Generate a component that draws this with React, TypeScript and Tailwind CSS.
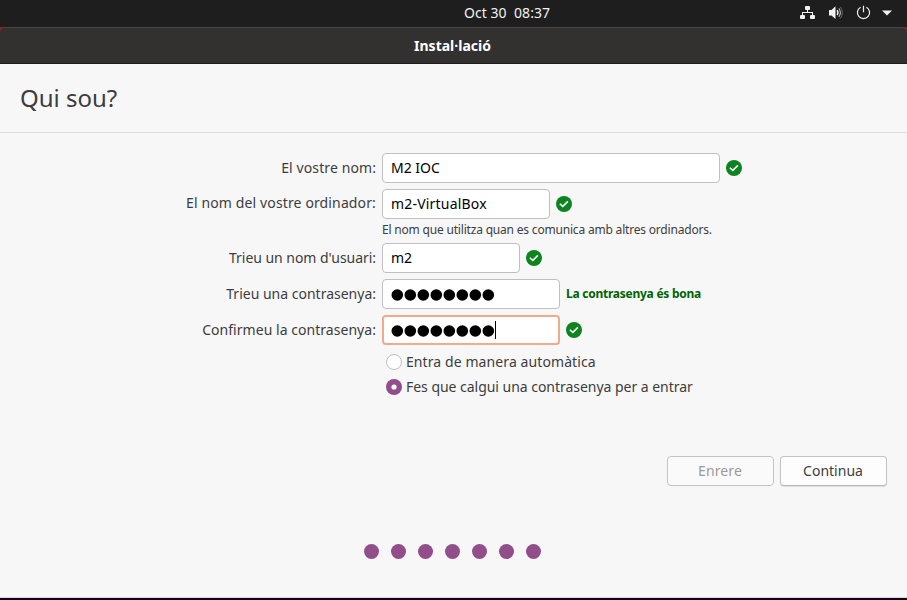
import type { ReactNode } from "react";

function Check() {
  return (
    <svg className="ml-1.5 size-4 shrink-0" viewBox="0 0 16 16">
      <circle cx="8" cy="8" r="8" fill="#0e8420" />
      <path d="M3.8 7.8 6.8 10.4 11.9 5.4" fill="none" stroke="#fff" strokeWidth="1.5" />
    </svg>
  );
}

function Bullets() {
  return (
    <svg className="mt-0.5 h-3 w-[104px]" viewBox="0 0 104 12">
      {Array.from({ length: 8 }, (_, i) => (
        <circle key={i} cx={6.3 + i * 13} cy="6" r="5.8" fill="#000" />
      ))}
    </svg>
  );
}

type RowProps = { label: string; labelClass?: string; className?: string; children: ReactNode };

function Row({ label, labelClass = "", className = "", children }: RowProps) {
  return (
    <div className={"flex h-[30px] items-center " + className}>
      <div className={"w-[376px] text-right whitespace-pre " + labelClass}>{label}</div>
      <div className="ml-1.5 flex h-full items-center">{children}</div>
    </div>
  );
}

const field =
  "flex h-[30px] items-center rounded-[4px] border border-[#bfbfbf] bg-white px-2 whitespace-pre text-black ";
const button =
  "flex h-[30px] w-[107px] items-center justify-center rounded-[4px] border border-[#c4c4c4] ";

function StatusIcons() {
  return (
    <div className="flex items-center pr-[15px]">
      {/* wired network */}
      <svg className="h-4 w-[15px]" viewBox="0 0 15 16" fill="#f2f2f2">
        <rect x="5" y="1" width="5" height="4" rx="1" />
        <rect x="0" y="10" width="5" height="4" rx="1" />
        <rect x="10" y="10" width="5" height="4" rx="1" />
        <path d="M7 4.5h1V7H13v3h-1V8H3v2H2V7h5z" />
      </svg>
      {/* volume */}
      <svg className="ml-[13px] size-4" viewBox="0 0 16 16">
        <path d="M1 5h2.5L7.5 1.2V14L3.5 10.5H1z" fill="#f2f2f2" />
        <path d="M9 5.2q2 2.3 0 4.8" fill="none" stroke="#f2f2f2" strokeWidth="1.4" />
        <path d="M10.8 3.4q3.2 4.2 0 8.4" fill="none" stroke="#b5b5b5" strokeWidth="1.1" />
        <path d="M12.3 1.8q4.2 5.8 0 11.6" fill="none" stroke="#666" strokeWidth="1" />
      </svg>
      {/* power */}
      <svg className="ml-3 size-4" viewBox="0 0 16 16" fill="none" stroke="#f2f2f2" strokeWidth="1.2">
        <path d="M4.6 2.2a6.1 6.1 0 1 0 5.8 0M7.5 0.7v6.5" />
      </svg>
      <svg className="ml-[10px] h-[6px] w-[10px]" viewBox="0 0 10 6">
        <path d="M0 .5h10L5 5.5z" fill="#f2f2f2" />
      </svg>
    </div>
  );
}

export default function App() {
  return (
    <div className="flex h-[600px] w-[907px] flex-col overflow-hidden bg-[#1e1e1e] font-['Noto_Sans',sans-serif] text-[14px] leading-5 text-[#3d3d3d]">
      <header className="flex h-[27px] shrink-0 items-center justify-between pb-px pl-[464px] whitespace-pre text-[#f2f2f2]">
        <span className="tracking-[0.05px]">Oct 30  08:37</span>
        <StatusIcons />
      </header>
      <div className="h-[37px] shrink-0 bg-[#a5141c]">
        <div className="flex h-full items-center justify-center rounded-t-[5px] border-t border-b border-t-[#484646] border-b-[#1c1a1b] bg-[#333030] pr-[2px] font-bold text-white">
          Instal·lació
        </div>
      </div>
      <main className="flex flex-1 flex-col border-b-2 border-[#1d0018] bg-[#f7f7f7]">
        <h1 className="flex h-[69px] items-center border-b border-[#dcdcdc] pl-5 text-[24px]">Qui sou?</h1>
        <Row label="El vostre nom:" labelClass="tracking-[0.1px]" className="mt-5">
          <div className={field + "w-[338px]"}>M2 IOC</div>
          <Check />
        </Row>
        <Row label="El nom del vostre ordinador:" labelClass="pb-0.5 tracking-[0.13px]" className="mt-1.5">
          <div className={field + "w-[168px] tracking-[0.2px]"}>m2-VirtualBox</div>
          <Check />
        </Row>
        <div className="flex h-6 items-center pb-0.5 pl-[382px] text-[12px] tracking-[-0.19px]">
          El nom que utilitza quan es comunica amb altres ordinadors.
        </div>
        <Row label="Trieu un nom d'usuari:" labelClass="tracking-[-0.04px]">
          <div className={field + "w-[138px]"}>m2</div>
          <Check />
        </Row>
        <Row label="Trieu una contrasenya:" className="mt-1.5">
          <div className={field + "w-[178px]"}>
            <Bullets />
          </div>
          <span className="ml-1.5 text-[12px] font-bold tracking-[-0.25px] text-[#006400]">La contrasenya és bona</span>
        </Row>
        <Row label="Confirmeu la contrasenya:" labelClass="tracking-[0.04px]" className="mt-1.5">
          <div className="flex h-[30px] w-[178px] items-center rounded-[4px] border-2 border-[#f4a88c] bg-white px-[7px]">
            <Bullets />
            <span className="h-[18px] w-px bg-black" />
          </div>
          <Check />
        </Row>
        <div className="mt-[7px] ml-[386px] flex h-5 items-center gap-1 tracking-[0.09px]">
          <span className="size-4 rounded-full border border-[#bfbfbf] bg-white" />
          Entra de manera automàtica
        </div>
        <div className="mt-[5px] ml-[386px] flex h-5 items-center gap-1 tracking-[-0.03px]">
          <svg className="size-4" viewBox="0 0 16 16">
            <circle cx="8" cy="8" r="8" fill="#924d8b" />
            <circle cx="8" cy="8" r="2.6" fill="#fff" />
          </svg>
          Fes que calgui una contrasenya per a entrar
        </div>
        <div className="mt-[59px] flex justify-end gap-1.5 pr-5">
          <div className={button + "bg-[#fafafa] pr-px tracking-[0.1px] text-[#9a9a9a]"}>Enrere</div>
          <div className={button + "border-b-[#b8b8b8] bg-[#fdfdfd] pr-px shadow-[0_1px_1px_rgba(0,0,0,0.1)]"}>Continua</div>
        </div>
        <div className="mt-[58px] flex gap-3 pl-[364px]">
          {Array.from({ length: 7 }, (_, i) => (
            <span key={i} className="size-[15px] rounded-full bg-[#924d8b]" />
          ))}
        </div>
        <div className="mt-auto h-px bg-[#dadada]" />
      </main>
    </div>
  );
}
